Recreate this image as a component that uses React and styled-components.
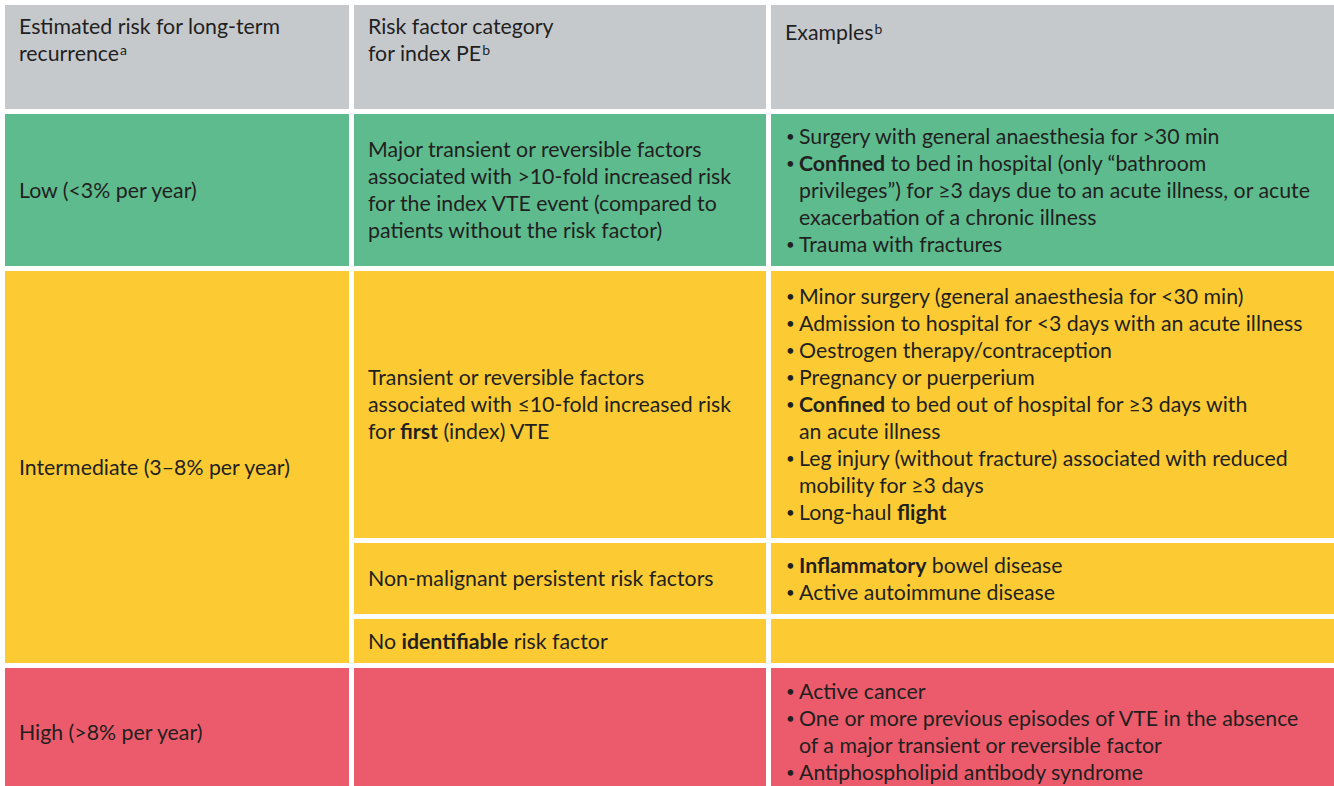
import styled, { createGlobalStyle } from "styled-components";

const GlobalStyle = createGlobalStyle`
  html, body {
    margin: 0;
    padding: 0;
    background: #ffffff;
    overflow: hidden;
  }
`;

const colors = {
  head: "#c6c9cc",
  low: "#5ebb8e",
  mid: "#fccb34",
  high: "#ec5b6b",
};

const Page = styled.div`
  width: 1334px;
  height: 786px;
  overflow: hidden;
  background: #ffffff;
  padding: 5px 0 0 5px;
  box-sizing: border-box;
  font-family: Lato, "Open Sans", sans-serif;
  font-size: 21.3px;
  line-height: 27px;
  color: #221f1f;
`;

const Table = styled.div`
  display: grid;
  grid-template-columns: 344px 412px 1fr;
  grid-template-rows: 104px 152px 267px 71px 44px 128px;
  gap: 5px;
`;

const Cell = styled.div`
  background: ${(p) => colors[p.$tone]};
  padding: ${(p) => (p.$head ? `${p.$top || 8}px 14px 0` : "0 14px")};
  display: flex;
  flex-direction: column;
  justify-content: ${(p) => (p.$head ? "flex-start" : "center")};
  grid-row: ${(p) => (p.$span ? `span ${p.$span}` : "auto")};
  white-space: nowrap;
`;

const Wrap = styled.div`
  white-space: normal;
`;

const Sup = styled.sup`
  font-size: 14px;
  line-height: 0;
  vertical-align: 6px;
  margin-left: 1px;
`;

const B = styled.b`
  font-weight: 700;
`;

const List = styled.ul`
  margin: 0;
  padding: 0;
  list-style: none;
`;

const Item = styled.li`
  padding-left: 14px;
  text-indent: -14px;
  &::before {
    content: "•";
    display: inline-block;
    width: 14px;
    text-indent: 0;
    font-size: 15px;
    vertical-align: 2px;
    padding-left: 1px;
    box-sizing: border-box;
  }
`;

const Bullets = ({ items }) => (
  <List>
    {items.map((it, i) => (
      <Item key={i}>{it}</Item>
    ))}
  </List>
);

export default function App() {
  return (
    <Page>
      <GlobalStyle />
      <Table>
        <Cell $tone="head" $head>
          <Wrap>
            Estimated risk for long-term recurrence<Sup>a</Sup>
          </Wrap>
        </Cell>
        <Cell $tone="head" $head>
          <div>
            Risk factor category
            <br />
            for index PE<Sup>b</Sup>
          </div>
        </Cell>
        <Cell $tone="head" $head $top={14}>
          <div>
            Examples<Sup>b</Sup>
          </div>
        </Cell>

        <Cell $tone="low">Low (&lt;3% per year)</Cell>
        <Cell $tone="low">
          <div>
            Major transient or reversible factors
            <br />
            associated with &gt;10-fold increased risk
            <br />
            for the index VTE event (compared to
            <br />
            patients without the risk factor)
          </div>
        </Cell>
        <Cell $tone="low">
          <Bullets
            items={[
              "Surgery with general anaesthesia for >30 min",
              <>
                <B>Confined</B> to bed in hospital (only “bathroom
                <br />
                privileges”) for ≥3 days due to an acute illness, or acute
                <br />
                exacerbation of a chronic illness
              </>,
              "Trauma with fractures",
            ]}
          />
        </Cell>

        <Cell $tone="mid" $span={3}>
          Intermediate (3–8% per year)
        </Cell>
        <Cell $tone="mid">
          <div>
            Transient or reversible factors
            <br />
            associated with ≤10-fold increased risk
            <br />
            for <B>first</B> (index) VTE
          </div>
        </Cell>
        <Cell $tone="mid">
          <Bullets
            items={[
              "Minor surgery (general anaesthesia for <30 min)",
              "Admission to hospital for <3 days with an acute illness",
              "Oestrogen therapy/contraception",
              "Pregnancy or puerperium",
              <>
                <B>Confined</B> to bed out of hospital for ≥3 days with
                <br />
                an acute illness
              </>,
              <>
                Leg injury (without fracture) associated with reduced
                <br />
                mobility for ≥3 days
              </>,
              <>
                Long-haul <B>flight</B>
              </>,
            ]}
          />
        </Cell>

        <Cell $tone="mid">Non-malignant persistent risk factors</Cell>
        <Cell $tone="mid">
          <Bullets
            items={[
              <>
                <B>Inflammatory</B> bowel disease
              </>,
              "Active autoimmune disease",
            ]}
          />
        </Cell>

        <Cell $tone="mid">
          <div>
            No <B>identifiable</B> risk factor
          </div>
        </Cell>
        <Cell $tone="mid" />

        <Cell $tone="high">High (&gt;8% per year)</Cell>
        <Cell $tone="high" />
        <Cell $tone="high">
          <Bullets
            items={[
              "Active cancer",
              <>
                One or more previous episodes of VTE in the absence
                <br />
                of a major transient or reversible factor
              </>,
              "Antiphospholipid antibody syndrome",
            ]}
          />
        </Cell>
      </Table>
    </Page>
  );
}
